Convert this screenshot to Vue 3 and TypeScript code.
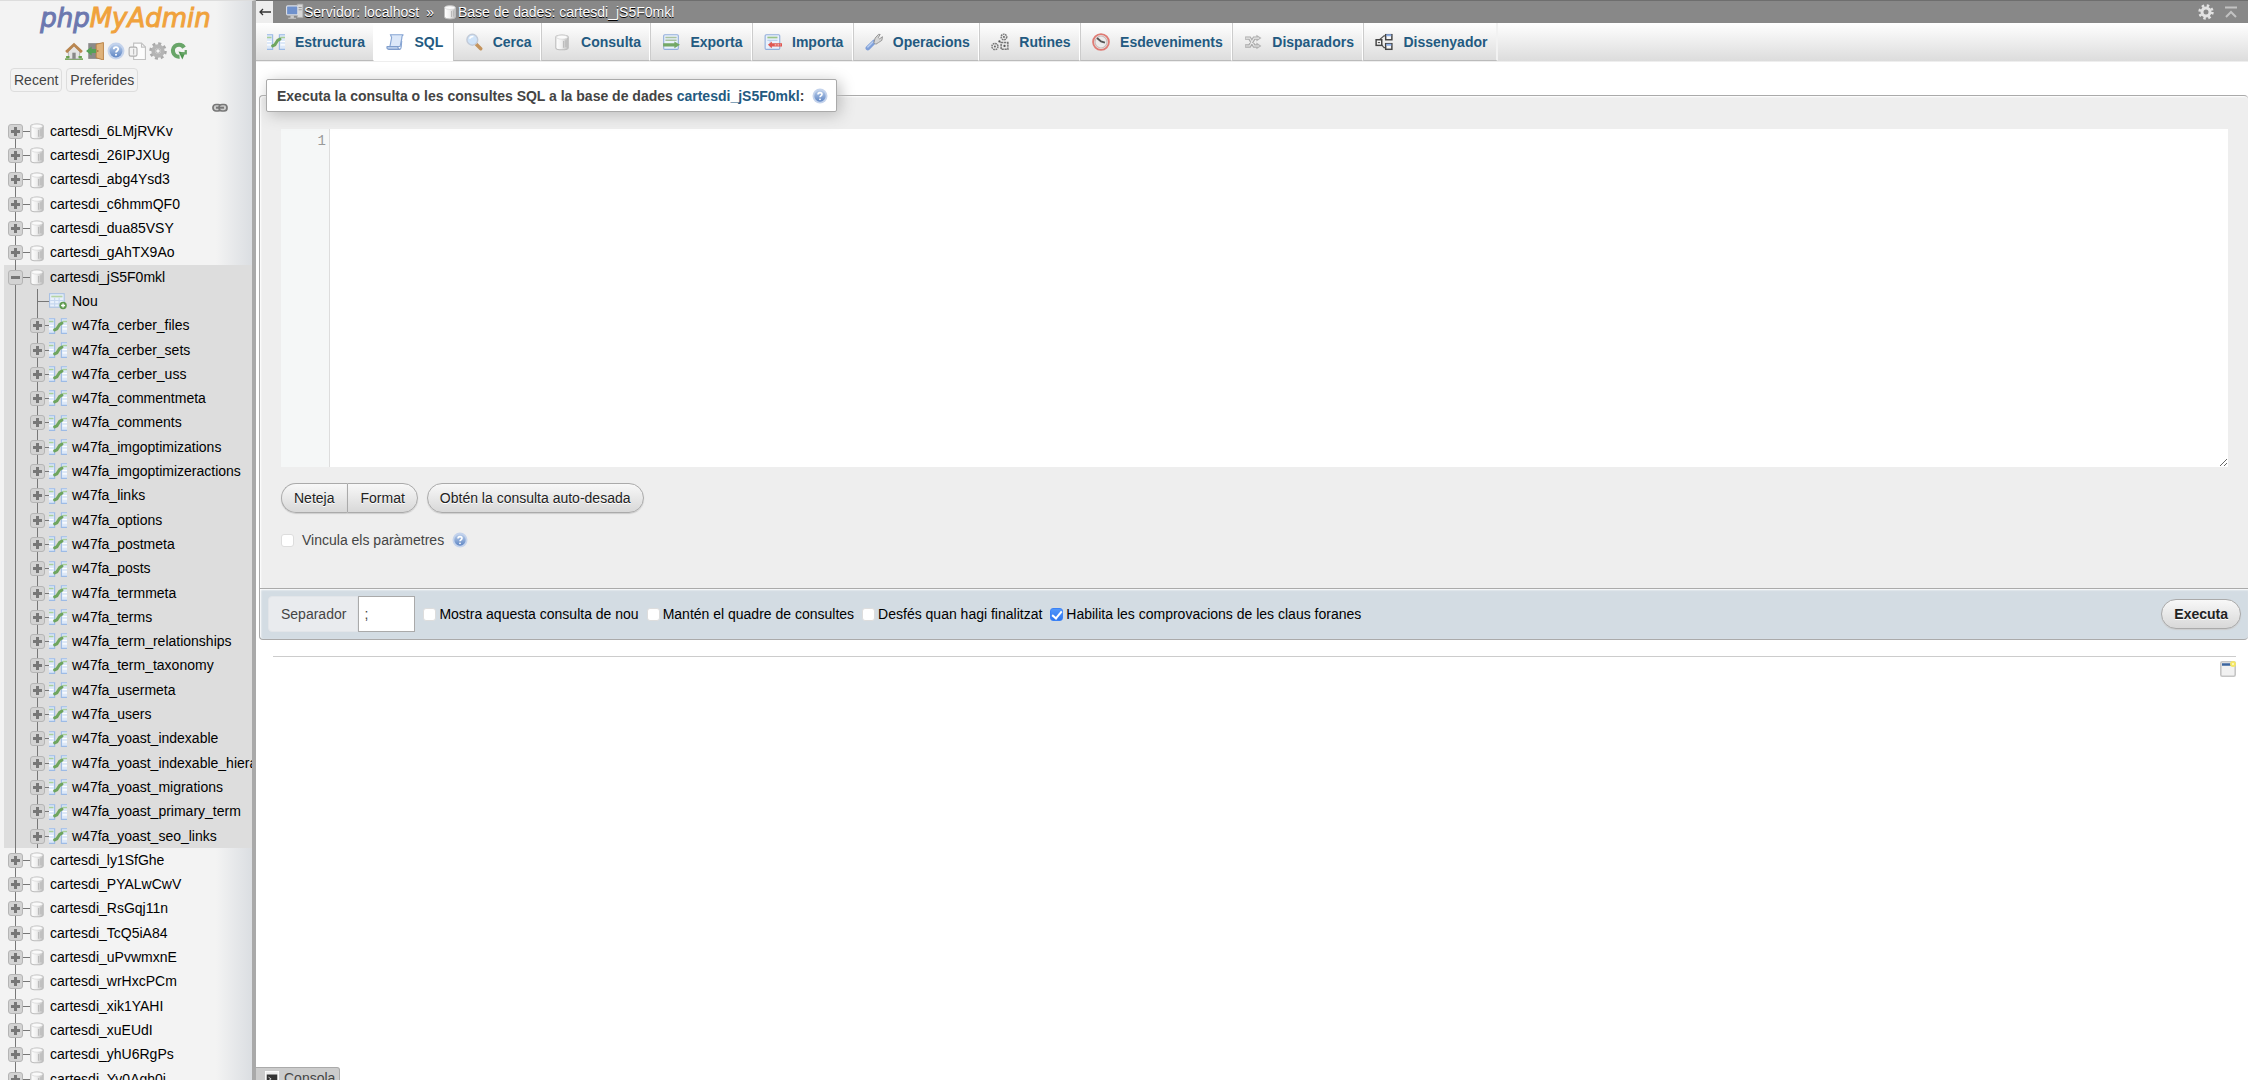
<script setup lang="ts">
import { ref } from 'vue'

interface TreeRow {
  name: string
  kind: 'database' | 'table' | 'new'
  open?: boolean
}

interface Tab {
  label: string
  icon: string
}

const activeDatabase = 'cartesdi_jS5F0mkl'

const before = ['6LMjRVKv', '26IPJXUg', 'abg4Ysd3', 'c6hmmQF0', 'dua85VSY', 'gAhTX9Ao']
const tables = [
  'cerber_files', 'cerber_sets', 'cerber_uss', 'commentmeta', 'comments',
  'imgoptimizations', 'imgoptimizeractions', 'links', 'options', 'postmeta',
  'posts', 'termmeta', 'terms', 'term_relationships', 'term_taxonomy',
  'usermeta', 'users', 'yoast_indexable', 'yoast_indexable_hierarchy',
  'yoast_migrations', 'yoast_primary_term', 'yoast_seo_links',
]
const after = [
  'ly1SfGhe', 'PYALwCwV', 'RsGqj11n', 'TcQ5iA84', 'uPvwmxnE', 'wrHxcPCm',
  'xik1YAHI', 'xuEUdI', 'yhU6RgPs', 'Yv0Agh0i',
]

const database = (suffix: string): TreeRow => ({ name: `cartesdi_${suffix}`, kind: 'database' })

const rows: TreeRow[] = [
  ...before.map(database),
  { name: activeDatabase, kind: 'database', open: true },
  { name: 'Nou', kind: 'new' },
  ...tables.map((t): TreeRow => ({ name: `w47fa_${t}`, kind: 'table' })),
  ...after.map(database),
]

const rowIcon = { database: 'i-db', table: 'i-structure', new: 'i-new' }

const navIcons = [
  { icon: 'i-home', label: 'Inici' },
  { icon: 'i-exit', label: 'Surt' },
  { icon: 'i-help', label: 'Documentació' },
  { icon: 'i-docs', label: 'Documentació SQL' },
  { icon: 'i-gear', label: 'Paràmetres' },
  { icon: 'i-reload', label: 'Recarrega' },
]

const tabs: Tab[] = [
  { label: 'Estructura', icon: 'i-structure' },
  { label: 'SQL', icon: 'i-sql' },
  { label: 'Cerca', icon: 'i-search' },
  { label: 'Consulta', icon: 'i-db' },
  { label: 'Exporta', icon: 'i-export' },
  { label: 'Importa', icon: 'i-import' },
  { label: 'Operacions', icon: 'i-wrench' },
  { label: 'Rutines', icon: 'i-routines' },
  { label: 'Esdeveniments', icon: 'i-clock' },
  { label: 'Disparadors', icon: 'i-triggers' },
  { label: 'Dissenyador', icon: 'i-designer' },
]
const activeTab = ref('SQL')

const query = ref('')
const delimiter = ref(';')
const bindParams = ref(false)
const options = ref([
  { label: 'Mostra aquesta consulta de nou', checked: false },
  { label: 'Mantén el quadre de consultes', checked: false },
  { label: 'Desfés quan hagi finalitzat', checked: false },
  { label: 'Habilita les comprovacions de les claus foranes', checked: true },
])
</script>

<template>
  <div class="app">
    <svg class="sprite" aria-hidden="true">
      <defs>
        <linearGradient id="g-db"><stop offset="0" stop-color="#fff" /><stop offset=".45" stop-color="#f0f0f0" /><stop offset="1" stop-color="#bbb" /></linearGradient>
        <linearGradient id="g-blue" x2="0" y2="1"><stop offset="0" stop-color="#b9cdea" /><stop offset="1" stop-color="#5f86c4" /></linearGradient>
        <symbol id="i-db" viewBox="0 0 16 16">
          <path d="M2.5 3.5C2.5 1.2 13.500 1.200 13.500 3.500V13C13.500 15.500 2.500 15.500 2.500 13Z" fill="url(#g-db)" stroke="#bcbcbc" />
          <ellipse cx="8" cy="3.700" rx="5" ry="1.800" fill="#fafafa" stroke="#d4d4d4" stroke-width=".6" />
          <path d="M9.500 7V13M11.500 6.500V12.500" stroke="#b8b8b8" />
        </symbol>
        <symbol id="i-structure" viewBox="0 0 16 16">
          <path d="M0 1H5V15H0Z" fill="#dce8f8" /><path d="M11 1H16V15H11Z" fill="#dce8f8" />
          <path d="M0 1.500H5V14.500H0M16 1.500H11V14.500H16" fill="none" stroke="#9dbbe5" />
          <path d="M0 4H4M12 4H16" stroke="#a9cf98" stroke-width="1.500" />
          <path d="M0 7.500H4M0 10.500H4M12 7.500H16M12 10.500H16" stroke="#fff" />
          <path d="M5 11.500L7 10.500L9.500 6.500L11.500 5.500" fill="none" stroke="#6fa55e" stroke-width="2.700" stroke-linecap="round" />
        </symbol>
        <symbol id="i-new" viewBox="0 0 16 16">
          <rect x=".5" y="1.500" width="13" height="12" fill="#e8f0fb" stroke="#a9c1e3" />
          <path d="M2 4H12" stroke="#b4d3a5" stroke-width="1.500" /><path d="M5 5V13M9 5V13M1 7.500H13M1 10.500H13" stroke="#c5d6ee" />
          <circle cx="12.500" cy="12" r="3.300" fill="#5f9a4f" /><path d="M12.500 10.200V13.800M10.700 12H14.300" stroke="#fff" stroke-width="1.200" />
        </symbol>
        <symbol id="i-sql" viewBox="0 0 16 16">
          <path d="M4 1.500H15.500C14 2 14 4 14 5L12.500 12H3.500L5 4Z" fill="#dce8f9" stroke="#87a5d3" />
          <path d="M1 12H10.500C10.500 14 11.500 14.500 12.500 14.500H2.500C1 14.500 .5 13.500 1 12Z" fill="#b8cdea" stroke="#7f9dcc" />
          <path d="M12.500 14.500C14 14 13.500 10 14 7" fill="none" stroke="#87a5d3" />
        </symbol>
        <symbol id="i-search" viewBox="0 0 16 16">
          <path d="M10 10L14 14" stroke="#c4935c" stroke-width="3" stroke-linecap="round" />
          <circle cx="6.500" cy="6" r="4.800" fill="#cfe3f8" stroke="#c3cbd8" stroke-width="1.300" /><path d="M4 5Q5 3 7.500 3.200" stroke="#fff" fill="none" stroke-width="1.300" />
        </symbol>
        <symbol id="i-export" viewBox="0 0 16 16">
          <rect x="1.500" y="1.500" width="13" height="13" rx="1" fill="#e9f1fc" stroke="#93afdb" /><path d="M3 4H13M3 6.500H13" stroke="#a9c39f" stroke-width="1.300" />
          <path d="M1 9H11V7.500L16 10.500L11 13.500V12H1Z" fill="#74a866" />
        </symbol>
        <symbol id="i-import" viewBox="0 0 16 16">
          <rect x="1" y="1.500" width="13" height="13" rx="1" fill="#e9f1fc" stroke="#93afdb" /><path d="M3 4H12" stroke="#9ac387" stroke-width="1.500" /><path d="M3 6.500H12M5.500 7V13" stroke="#bcd0ed" />
          <path d="M16 9H7V7.500L3.500 10.500L7 13.500V12H16Z" fill="#df5752" /><path d="M9.500 10.500H15" stroke="#f8c5c1" stroke-dasharray="1.500 1" />
        </symbol>
        <symbol id="i-wrench" viewBox="0 0 16 16">
          <path d="M2.500 13.500L8 8" stroke="#7f9fd8" stroke-width="4" stroke-linecap="round" /><path d="M2.500 12.500L7 8" stroke="#b9cef1" stroke-width="1.300" stroke-linecap="round" />
          <path d="M8 8.500L9 4.500L12 1.200L13.500 1.300L11.800 4L13 5.200L15.500 3.300L15 6.500L12 8.500L9.500 10Z" fill="#d6d6d6" stroke="#8f8f8f" stroke-width=".8" />
        </symbol>
        <symbol id="i-routines" viewBox="0 0 16 16">
          <g fill="#e8e8e8" stroke="#777" stroke-width="1.300"><circle cx="11.500" cy="3.500" r="2.500" stroke-dasharray="1.500 .6" /><circle cx="3.500" cy="12" r="2.700" stroke-dasharray="1.500 .6" /><rect x="9" y="8.500" width="6" height="6" stroke-dasharray="2 .6" /></g>
          <g fill="#555"><circle cx="11.500" cy="3.500" r=".8" /><circle cx="3.500" cy="12" r=".8" /><circle cx="12" cy="11.500" r="1" /><circle cx="7.500" cy="7.500" r="1" /></g>
        </symbol>
        <symbol id="i-clock" viewBox="0 0 16 16">
          <circle cx="8" cy="8" r="7" fill="#ececec" stroke="#df7b74" stroke-width="1.700" /><circle cx="8" cy="8" r="5.300" fill="none" stroke="#c9bbb9" /><path d="M4.500 4.500L8 7.500L11.500 8.500" fill="none" stroke="#555" stroke-width="1.700" />
        </symbol>
        <symbol id="i-triggers" viewBox="0 0 16 16">
          <g fill="none" stroke="#aaa" stroke-width="3"><path d="M1 4.500H5L9 11.500H12M1 11.500H5L9 4.500H12" /></g><path d="M11 1.500L15.500 4.500L11 7.500ZM11 8.500L15.500 11.500L11 14.500Z" fill="#b2b2b2" />
          <g fill="none" stroke="#e9e9e9"><path d="M1.500 4.500H5L9 11.500H13.500M1.500 11.500H5L9 4.500H13.500" /></g>
        </symbol>
        <symbol id="i-designer" viewBox="0 0 16 16">
          <path d="M4 6L8 2.500H10M5 9.500L8 13H10" fill="none" stroke="#555" />
          <g fill="#f7f7f7" stroke="#444" stroke-width="1.300"><rect x="1" y="6" width="5" height="5" /><rect x="9.500" y="1.500" width="5.500" height="4.500" /><rect x="9.500" y="9.500" width="5.500" height="5" /></g>
          <path d="M10 2H14.500M10 10.500H14.500" stroke="#8eafe6" stroke-width="1.700" /><path d="M2.500 8.500H4.500" stroke="#555" />
        </symbol>
        <symbol id="i-help" viewBox="0 0 16 16">
          <circle cx="8" cy="8" r="7.500" fill="#c4d3ec" /><circle cx="8" cy="8" r="5.700" fill="url(#g-blue)" /><path d="M6 6.500C6 4 10 4 10 6.300C10 8 8 7.800 8 9.300" fill="none" stroke="#fff" stroke-width="1.600" /><circle cx="8" cy="11.300" r=".9" fill="#fff" />
        </symbol>
        <symbol id="i-home" viewBox="0 0 16 16">
          <path d="M0 14.500H16V16H0Z" fill="#7cab61" /><path d="M3 8L8 3.500L13 8V15H3Z" fill="#e4e4e4" stroke="#a5a5a5" stroke-width=".7" /><path d="M1 9L8 2.300L15 9" fill="none" stroke="#b98650" stroke-width="2.500" /><path d="M6.500 9.500H9.500V15H6.500Z" fill="#888" /><path d="M1 13.500H4M12 13.500H15" stroke="#68a04f" stroke-width="2" />
        </symbol>
        <symbol id="i-exit" viewBox="0 0 16 16">
          <path d="M2 1H15V15H2Z" fill="#8a8a8a" /><path d="M9 2L15.500 .5V16L9 14Z" fill="#dfb27a" stroke="#b87f42" stroke-width=".8" /><path d="M0 8L5 4V6.300H9V9.700H5V12Z" fill="#55a157" /><circle cx="10.500" cy="8" r=".7" fill="#8d602d" />
        </symbol>
        <symbol id="i-docs" viewBox="0 0 16 16">
          <path d="M5 1H12L15.500 4.500V15.500H5Z" fill="#fcfcfc" stroke="#c1c1c1" /><path d="M12 1V4.500H15.500" fill="none" stroke="#c1c1c1" /><rect x="1" y="4.500" width="7" height="8" rx="1.500" fill="#f3f3f3" stroke="#b0b0b0" /><path d="M5 6V11" stroke="#bcbcbc" />
        </symbol>
        <symbol id="i-gear" viewBox="0 0 16 16">
          <circle cx="8" cy="8" r="6.500" fill="none" stroke="#aaa" stroke-width="2.600" stroke-dasharray="2.600 2.500" /><circle cx="8" cy="8" r="4.200" fill="none" stroke="#b5b5b5" stroke-width="3.500" /><circle cx="8" cy="8" r="2" fill="#f3f3f3" stroke="#999" stroke-width=".7" />
        </symbol>
        <symbol id="i-reload" viewBox="0 0 16 16">
          <path d="M12.500 5A5.300 5.300 0 1 0 8.500 13" fill="none" stroke="#68a568" stroke-width="3.600" /><path d="M7.500 8.500L13.500 9.500L11 15.500Z" fill="#4f964f" /><path d="M10 10H14V7" stroke="#68a568" stroke-width="2" fill="none" />
        </symbol>
        <symbol id="i-link" viewBox="0 0 16 10">
          <rect x="1" y="1.500" width="8" height="6.500" rx="3" fill="#ccc" stroke="#777" stroke-width="1.700" /><rect x="7" y="1.500" width="8" height="6.500" rx="3" fill="#ccc" stroke="#777" stroke-width="1.700" /><path d="M4 4.700H12" stroke="#777" stroke-width="2" />
        </symbol>
        <symbol id="i-server" viewBox="0 0 16 16">
          <path d="M10 1H15V13H10Z" fill="#d7d7d7" stroke="#aaa" stroke-width=".7" /><path d="M11 4H14M11 6H14" stroke="#999" /><rect x=".5" y="2.500" width="10" height="8" rx="1" fill="#6f91cc" stroke="#d9dde4" /><path d="M4 11H7V13H9V14H2V13H4Z" fill="#c9c9c9" />
        </symbol>
        <symbol id="i-gear-light" viewBox="0 0 16 16">
          <circle cx="8" cy="8" r="6.300" fill="none" stroke="#e2e2e2" stroke-width="2.800" stroke-dasharray="2.400 2.548" /><circle cx="8" cy="8" r="4" fill="none" stroke="#e2e2e2" stroke-width="3" />
        </symbol>
        <symbol id="i-top" viewBox="0 0 12 12">
          <path d="M0 1.500H12M1 11L6 6L11 11" fill="none" stroke="#c2c2c2" stroke-width="2" />
        </symbol>
        <symbol id="i-window" viewBox="0 0 16 16">
          <rect x=".8" y=".8" width="14.400" height="14.400" rx="1.500" fill="#f1f1f1" stroke="#c5c5c5" stroke-width="1.600" /><path d="M2 3.500H11" stroke="#3b659f" stroke-width="2.500" /><circle cx="13" cy="3" r="3" fill="#f5e766" /><circle cx="13" cy="3" r="1" fill="#fffbd0" />
        </symbol>
        <symbol id="i-console" viewBox="0 0 16 16">
          <rect x=".5" y=".5" width="15" height="15" fill="#eee" stroke="#fff" /><path d="M2 4H14V14H2Z" fill="#333" /><path d="M4 7L7 9L4 11" stroke="#ddd" fill="none" />
        </symbol>
      </defs>
    </svg>

    <nav class="side" aria-label="Navegació">
      <a class="logo" href="#"><span class="logo-php">php</span><span class="logo-my">MyAdmin</span></a>
      <div class="side-icons">
        <a v-for="n in navIcons" :key="n.icon" href="#" :aria-label="n.label"><svg class="icon"><use :href="`#${n.icon}`" /></svg></a>
      </div>
      <div class="side-buttons">
        <button type="button">Recent</button>
        <button type="button">Preferides</button>
      </div>
      <div class="side-link"><a href="#" aria-label="Enllaça amb el quadre principal"><svg><use href="#i-link" /></svg></a></div>
      <ul class="tree">
        <li v-for="row in rows" :key="row.name" :class="['row', row.kind, { open: row.open }]">
          <span v-if="row.kind !== 'database'" class="guide"></span>
          <span class="branch">
            <button v-if="row.kind !== 'new'" type="button" class="toggle" :class="{ minus: row.open }" :aria-label="row.open ? 'Contrau' : 'Expandeix'"></button>
          </span>
          <a class="row-icon" href="#" :aria-label="`Obre ${row.name}`"><svg><use :href="`#${rowIcon[row.kind]}`" /></svg></a>
          <a class="row-name" href="#">{{ row.name }}</a>
        </li>
      </ul>
    </nav>

    <main class="main">
      <header class="crumbs">
        <button type="button" class="collapse" aria-label="Amaga el quadre"><svg viewBox="0 0 12 8"><path d="M4 1L1 4L4 7M1 4H12" fill="none" stroke="#333" stroke-width="1.300" /></svg></button>
        <svg class="icon crumb-icon"><use href="#i-server" /></svg>
        <a href="#">Servidor: localhost</a>
        <span class="sep">»</span>
        <svg class="icon-16"><use href="#i-db" /></svg>
        <a href="#">Base de dades: {{ activeDatabase }}</a>
        <span class="crumb-tools">
          <a href="#" aria-label="Paràmetres de la pàgina"><svg class="icon-16"><use href="#i-gear-light" /></svg></a>
          <a href="#" aria-label="Amunt"><svg class="icon-12"><use href="#i-top" /></svg></a>
        </span>
      </header>

      <nav class="tabs" aria-label="Pestanyes">
        <div class="tab-list">
          <a v-for="tab in tabs" :key="tab.label" href="#" class="tab" :class="{ active: tab.label === activeTab }" @click.prevent="activeTab = tab.label">
            <svg class="icon"><use :href="`#${tab.icon}`" /></svg>{{ tab.label }}
          </a>
        </div>
      </nav>

      <form @submit.prevent>
        <section class="query">
          <h1 class="legend">
            <span>Executa la consulta o les consultes SQL a la base de dades <a href="#">{{ activeDatabase }}</a>:</span>
            <a href="#" aria-label="Documentació"><svg class="icon-16"><use href="#i-help" /></svg></a>
          </h1>
          <div class="editor">
            <div class="gutter">1</div>
            <textarea v-model="query" aria-label="Consulta SQL" spellcheck="false"></textarea>
          </div>
          <div class="buttons">
            <div class="group">
              <button type="button" class="pill">Neteja</button>
              <button type="button" class="pill">Format</button>
            </div>
            <button type="button" class="pill">Obtén la consulta auto-desada</button>
          </div>
          <div class="bind">
            <input id="bind" v-model="bindParams" type="checkbox" class="check">
            <label for="bind">Vincula els paràmetres</label>
            <a href="#" aria-label="Ajuda dels paràmetres"><svg class="icon-16"><use href="#i-help" /></svg></a>
          </div>
        </section>
        <footer class="actions">
          <div class="delimiter">
            <label for="delimiter">Separador</label>
            <input id="delimiter" v-model="delimiter" type="text">
          </div>
          <div class="options">
            <label v-for="o in options" :key="o.label"><input v-model="o.checked" type="checkbox" class="check">{{ o.label }}</label>
          </div>
          <button type="submit" class="pill strong">Executa</button>
        </footer>
      </form>

      <div class="page-end">
        <a href="#" aria-label="Obre una finestra nova"><svg class="icon-16"><use href="#i-window" /></svg></a>
      </div>

      <button type="button" class="console"><svg><use href="#i-console" /></svg>Consola</button>
    </main>
  </div>
</template>

<style>
body {
  background: #fff;
  overflow: hidden;
}
</style>

<style scoped>
* {
  box-sizing: border-box;
}
.app {
  display: flex;
  height: 100vh;
  font: 14px/16px "Liberation Sans", Arial, Helvetica, sans-serif;
  color: #444;
}
.sprite {
  position: absolute;
  width: 0;
  height: 0;
}
a {
  color: #235a81;
  text-decoration: none;
}
button,
input,
textarea {
  font: inherit;
  color: inherit;
  margin: 0;
}
svg {
  display: block;
}
.icon {
  flex: none;
  width: 18px;
  height: 18px;
}
.icon-16 {
  width: 16px;
  height: 16px;
}
.icon-12 {
  width: 12px;
  height: 12px;
}

/* Sidebar */
.side {
  flex: none;
  width: 256px;
  overflow: hidden;
  border-top: 1px solid #ddd;
  border-right: 4px solid #a9a9a9;
  background: linear-gradient(to right, #f3f3f3 216px, #dbdee2 252px);
}
.logo {
  display: block;
  margin-top: 2px;
  padding-right: 1px;
  text-align: center;
  font: italic 26px/30px "DejaVu Sans", sans-serif;
}
.logo-php {
  color: #6c78af;
  -webkit-text-stroke: 1px #6c78af;
}
.logo-my {
  color: #f0a23c;
  -webkit-text-stroke: 1px #f0a23c;
}
.side-icons {
  display: flex;
  justify-content: center;
  gap: 3px;
  margin-top: 9px;
}
.side-buttons {
  display: flex;
  gap: 4px;
  margin: 8px 0 0 10px;
}
.side-buttons button {
  height: 24px;
  padding: 0 3px;
  border: 1px solid #ddd;
  border-radius: 4px;
  background: #f3f3f3;
}
.side-link {
  display: flex;
  justify-content: flex-end;
  margin: 11px 24px 6px;
}
.side-link svg {
  width: 16px;
  height: 10px;
}
.tree {
  list-style: none;
  margin: 0;
  padding: 0 0 0 4px;
}
.row {
  display: flex;
  align-items: stretch;
  height: 24px;
  padding-left: 4px;
  line-height: 24px;
  white-space: nowrap;
}
.row:nth-child(10n + 3),
.row:nth-child(10n + 6),
.row:nth-child(10n + 9) {
  height: 25px;
}
.open,
.table,
.new {
  background: #ddd;
}
.guide {
  flex: none;
  width: 22px;
  background: linear-gradient(#777, #777) 7px 0 / 1px 100% no-repeat;
}
.branch {
  flex: none;
  display: flex;
  align-items: center;
  width: 22px;
  background:
    linear-gradient(#777, #777) 7px 0 / 1px 100% no-repeat,
    linear-gradient(#777, #777) 7px 50% / 15px 1px no-repeat;
}
.table .branch,
.new .branch {
  width: 19px;
}
.row:first-child .branch {
  background-position: 7px 12px, 7px 50%;
}
.toggle {
  width: 15px;
  height: 15px;
  padding: 0;
  border: 1px solid #b5b5b5;
  border-radius: 3px;
  background:
    linear-gradient(#777, #777) center / 9px 3px no-repeat,
    linear-gradient(#777, #777) center / 3px 9px no-repeat,
    #d3d3d3;
}
.toggle.minus {
  background:
    linear-gradient(#777, #777) center / 9px 3px no-repeat,
    #d3d3d3;
}
.row-icon {
  flex: none;
  display: flex;
  align-items: center;
  justify-content: center;
  width: 14px;
  margin-right: 6px;
}
.row-icon svg {
  flex: none;
  width: 18px;
  height: 18px;
}
.table .row-icon,
.new .row-icon {
  width: 18px;
  margin-right: 5px;
}
.row-name {
  color: #000;
}

/* Top bar and tabs */
.main {
  position: relative;
  flex: 1;
  min-width: 0;
}
.crumbs {
  display: flex;
  align-items: center;
  height: 23px;
  border-top: 1px solid #6e6e6e;
  background: #888;
  color: #fff;
  text-shadow: 0 1px 0 #000;
}
.crumbs a {
  color: #fff;
}
.collapse {
  display: flex;
  align-items: center;
  justify-content: center;
  width: 17px;
  height: 22px;
  padding: 0;
  border: 0;
  background: #eee;
}
.collapse svg {
  width: 12px;
  height: 8px;
}
.crumb-icon {
  margin-left: 13px;
}
.sep {
  margin: 0 8px 0 7px;
}
.crumb-tools {
  display: flex;
  align-items: center;
  gap: 11px;
  margin-left: auto;
  padding-right: 11px;
}
.tabs {
  height: 39px;
  border-bottom: 1px solid #eee;
  background: linear-gradient(#fff, #dcdcdc);
}
.tab-list {
  display: flex;
  max-width: 1242px;
  height: 38px;
}
.tab {
  flex: 1 0 auto;
  display: flex;
  align-items: center;
  gap: 10px;
  padding: 0 8px 0 11px;
  border-right: 1px solid #fff;
  border-bottom: 1px solid #bbb;
  border-left: 1px solid #ccc;
  font-weight: bold;
}
.tab:first-child {
  border-left: 0;
}
.tab:last-child {
  border-right: 2px solid #f2f2f2;
}
.tab.active {
  border-color: #fff;
  background: #fff;
}

/* Query form */
.query {
  margin: 33px 0 0 3px;
  padding: 0 20px 0 21px;
  height: 493px;
  border-top: 1px solid #aaa;
  border-left: 1px solid #aaa;
  border-radius: 4px 4px 0 0;
  background: #eee;
  box-shadow: inset 1px 1px 2px #fff;
}
.legend {
  position: relative;
  display: flex;
  align-items: center;
  gap: 8px;
  width: max-content;
  height: 33px;
  margin: -17px 0 17px -15px;
  padding: 0 8px 0 10px;
  border: 1px solid #aaa;
  border-radius: 2px;
  background: #fff;
  box-shadow: 3px 3px 15px #bbb;
  font-size: 14px;
  font-weight: bold;
}
.editor {
  display: flex;
  height: 338px;
  background: #fff;
}
.gutter {
  flex: none;
  width: 49px;
  padding: 4px 3px 0 0;
  border-right: 1px solid #ddd;
  background: #f5f7f7;
  color: #999;
  font: 14px/16px "Liberation Mono", monospace;
  text-align: right;
}
textarea {
  flex: 1;
  height: 338px;
  padding: 4px;
  border: 0;
  outline: 0;
  background: #fff;
  font-family: "Liberation Mono", monospace;
  resize: vertical;
}
.buttons {
  display: flex;
  gap: 9px;
  margin-top: 16px;
}
.group {
  display: flex;
}
.pill {
  height: 30px;
  padding: 0 12px;
  border: 1px solid #aaa;
  border-radius: 15px;
  background: linear-gradient(#f8f8f8, #d8d8d8);
  box-shadow: 0 1px 1px #ccc;
  color: #222;
  text-shadow: 0 1px 0 #fff;
}
.group .pill:first-child {
  border-right: 0;
  border-radius: 15px 0 0 15px;
  padding-right: 13px;
}
.group .pill:last-child {
  border-radius: 0 15px 15px 0;
}
.bind {
  display: flex;
  align-items: center;
  gap: 8px;
  margin-top: 19px;
}
.check {
  appearance: none;
  flex: none;
  width: 13px;
  height: 13px;
  border: 1px solid #ddd;
  border-radius: 3px;
  background: #fff;
}
.check:checked {
  border-color: #3b82f6;
  background: linear-gradient(#5197fb, #2e76ee);
  display: grid;
  place-items: center;
}
.check:checked::after {
  content: "";
  width: 4px;
  height: 8px;
  margin-bottom: 2px;
  border: solid #fff;
  border-width: 0 2px 2px 0;
  transform: rotate(40deg);
}
.actions {
  display: flex;
  align-items: center;
  height: 52px;
  margin-left: 3px;
  padding: 0 7px 0 8px;
  border: solid #aaa;
  border-width: 1px 0 1px 1px;
  border-radius: 0 0 4px 4px;
  background: #d3dce3;
  box-shadow: inset 1px 1px 2px #fff;
}
.delimiter {
  display: flex;
  height: 36px;
}
.delimiter label {
  padding: 0 11px 0 12px;
  border: 1px solid #e2e5e9;
  border-radius: 4px 0 0 4px;
  background: #e9ebee;
  line-height: 34px;
}
.delimiter input {
  width: 57px;
  padding: 0 5px;
  border: 1px solid #aaa;
  background: #fff;
}
.options {
  display: flex;
  gap: 8px;
  margin-left: 8px;
  color: #000;
}
.options label {
  display: flex;
  align-items: center;
  gap: 3px;
}
.strong {
  margin-left: auto;
  font-weight: bold;
}
.page-end {
  display: flex;
  justify-content: flex-end;
  margin: 16px 12px 0 17px;
  padding-top: 4px;
  border-top: 1px solid #ccc;
}
.console {
  position: absolute;
  left: 0;
  bottom: -9px;
  display: flex;
  align-items: center;
  gap: 5px;
  height: 22px;
  padding: 0 4px 0 9px;
  border: 1px solid #aaa;
  border-left: 0;
  border-radius: 0 3px 0 0;
  background: #ccc;
}
.console svg {
  width: 14px;
  height: 14px;
}
</style>
